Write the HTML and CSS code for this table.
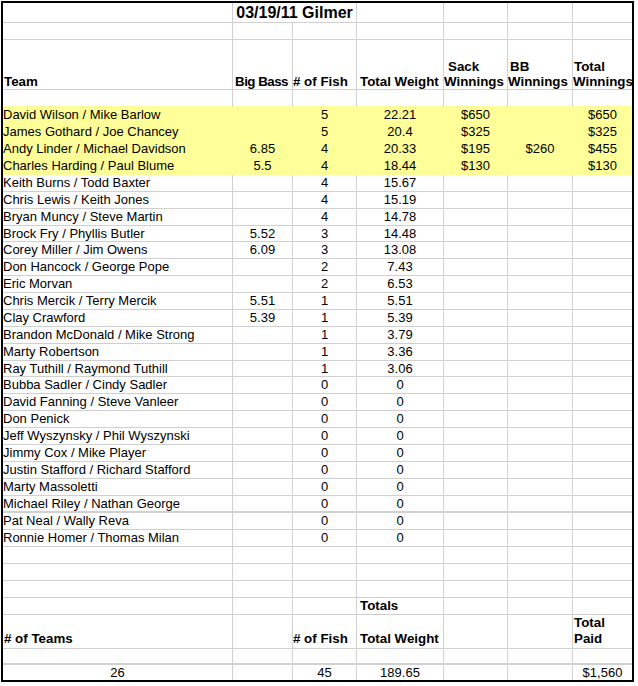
FILE: index.html
```html
<!DOCTYPE html>
<html>
<head>
<meta charset="utf-8">
<title>03/19/11 Gilmer</title>
<link rel="stylesheet" href="styles.css">
</head>
<body>
<table class="sheet">
  <colgroup>
    <col class="c-a"><col class="c-b"><col class="c-c"><col class="c-d"><col class="c-e"><col class="c-f"><col class="c-g">
  </colgroup>
  <tbody>
    <tr class="r-title"><td></td><td colspan="2" class="title">03/19/11 Gilmer</td><td></td><td></td><td></td><td></td></tr>
    <tr class="r"><td></td><td></td><td></td><td></td><td></td><td></td><td></td></tr>
    <tr class="r-head">
      <th class="pa">Team</th>
      <th class="pb tight">Big Bass</th>
      <th class="p0">#&nbsp;of Fish</th>
      <th class="pd">Total Weight</th>
      <th class="p0 ind4">Sack<br>Winnings</th>
      <th class="p0 ind2">BB<br>Winnings</th>
      <th class="p0 ind1">Total<br>Winnings</th>
    </tr>
    <tr class="r pre-hi"><td></td><td></td><td></td><td></td><td></td><td></td><td></td></tr>
    <tr class="r hi"><td>David Wilson / Mike Barlow</td><td class="n"></td><td class="n">5</td><td class="n">22.21</td><td class="n">$650</td><td class="n"></td><td class="n">$650</td></tr>
    <tr class="r hi"><td>James Gothard / Joe Chancey</td><td class="n"></td><td class="n">5</td><td class="n">20.4</td><td class="n">$325</td><td class="n"></td><td class="n">$325</td></tr>
    <tr class="r hi"><td>Andy Linder / Michael Davidson</td><td class="n">6.85</td><td class="n">4</td><td class="n">20.33</td><td class="n">$195</td><td class="n">$260</td><td class="n">$455</td></tr>
    <tr class="r hi"><td>Charles Harding / Paul Blume</td><td class="n">5.5</td><td class="n">4</td><td class="n">18.44</td><td class="n">$130</td><td class="n"></td><td class="n">$130</td></tr>
    <tr class="r"><td>Keith Burns / Todd Baxter</td><td class="n"></td><td class="n">4</td><td class="n">15.67</td><td></td><td></td><td></td></tr>
    <tr class="r"><td>Chris Lewis / Keith Jones</td><td class="n"></td><td class="n">4</td><td class="n">15.19</td><td></td><td></td><td></td></tr>
    <tr class="r"><td>Bryan Muncy / Steve Martin</td><td class="n"></td><td class="n">4</td><td class="n">14.78</td><td></td><td></td><td></td></tr>
    <tr class="r short"><td>Brock Fry / Phyllis Butler</td><td class="n">5.52</td><td class="n">3</td><td class="n">14.48</td><td></td><td></td><td></td></tr>
    <tr class="r"><td>Corey Miller / Jim Owens</td><td class="n">6.09</td><td class="n">3</td><td class="n">13.08</td><td></td><td></td><td></td></tr>
    <tr class="r"><td>Don Hancock / George Pope</td><td class="n"></td><td class="n">2</td><td class="n">7.43</td><td></td><td></td><td></td></tr>
    <tr class="r"><td>Eric Morvan</td><td class="n"></td><td class="n">2</td><td class="n">6.53</td><td></td><td></td><td></td></tr>
    <tr class="r"><td>Chris Mercik / Terry Mercik</td><td class="n">5.51</td><td class="n">1</td><td class="n">5.51</td><td></td><td></td><td></td></tr>
    <tr class="r"><td>Clay Crawford</td><td class="n">5.39</td><td class="n">1</td><td class="n">5.39</td><td></td><td></td><td></td></tr>
    <tr class="r"><td>Brandon McDonald / Mike Strong</td><td class="n"></td><td class="n">1</td><td class="n">3.79</td><td></td><td></td><td></td></tr>
    <tr class="r"><td>Marty Robertson</td><td class="n"></td><td class="n">1</td><td class="n">3.36</td><td></td><td></td><td></td></tr>
    <tr class="r short"><td>Ray Tuthill / Raymond Tuthill</td><td class="n"></td><td class="n">1</td><td class="n">3.06</td><td></td><td></td><td></td></tr>
    <tr class="r"><td>Bubba Sadler / Cindy Sadler</td><td class="n"></td><td class="n">0</td><td class="n">0</td><td></td><td></td><td></td></tr>
    <tr class="r"><td>David Fanning / Steve Vanleer</td><td class="n"></td><td class="n">0</td><td class="n">0</td><td></td><td></td><td></td></tr>
    <tr class="r"><td>Don Penick</td><td class="n"></td><td class="n">0</td><td class="n">0</td><td></td><td></td><td></td></tr>
    <tr class="r"><td>Jeff Wyszynsky / Phil Wyszynski</td><td class="n"></td><td class="n">0</td><td class="n">0</td><td></td><td></td><td></td></tr>
    <tr class="r"><td>Jimmy Cox / Mike Player</td><td class="n"></td><td class="n">0</td><td class="n">0</td><td></td><td></td><td></td></tr>
    <tr class="r"><td>Justin Stafford / Richard Stafford</td><td class="n"></td><td class="n">0</td><td class="n">0</td><td></td><td></td><td></td></tr>
    <tr class="r"><td>Marty Massoletti</td><td class="n"></td><td class="n">0</td><td class="n">0</td><td></td><td></td><td></td></tr>
    <tr class="r thick"><td>Michael Riley / Nathan George</td><td class="n"></td><td class="n">0</td><td class="n">0</td><td></td><td></td><td></td></tr>
    <tr class="r"><td>Pat Neal / Wally Reva</td><td class="n"></td><td class="n">0</td><td class="n">0</td><td></td><td></td><td></td></tr>
    <tr class="r"><td>Ronnie Homer / Thomas Milan</td><td class="n"></td><td class="n">0</td><td class="n">0</td><td></td><td></td><td></td></tr>
    <tr class="r"><td></td><td></td><td></td><td></td><td></td><td></td><td></td></tr>
    <tr class="r"><td></td><td></td><td></td><td></td><td></td><td></td><td></td></tr>
    <tr class="r"><td></td><td></td><td></td><td></td><td></td><td></td><td></td></tr>
    <tr class="r"><td></td><td></td><td></td><th class="pd">Totals</th><td></td><td></td><td></td></tr>
    <tr class="r-head2">
      <th class="pa">#&nbsp;of Teams</th>
      <td></td>
      <th class="p0">#&nbsp;of Fish</th>
      <th class="pd">Total Weight</th>
      <td></td>
      <td></td>
      <th class="pg">Total<br>Paid</th>
    </tr>
    <tr class="r-gap"><td></td><td></td><td></td><td></td><td></td><td></td><td></td></tr>
    <tr class="r-sum"><td class="n">26</td><td></td><td class="n">45</td><td class="n">189.65</td><td></td><td></td><td class="n">$1,560</td></tr>
  </tbody>
</table>
</body>
</html>
```

FILE: styles.css
```css
html, body {
  margin: 0;
  background: #ffffff;
}

body {
  font-family: "Liberation Sans", Arial, sans-serif;
  font-size: 13px;
  color: #000000;
}

.sheet {
  margin: 1px 0 0 1px;
  width: 633px;
  border: 2px solid #000000;
  border-collapse: separate;
  border-spacing: 0;
  table-layout: fixed;
}

.c-a { width: 230px; }
.c-b { width: 60px; }
.c-c { width: 64px; }
.c-d { width: 87px; }
.c-e { width: 64px; }
.c-f { width: 65px; }
.c-g { width: 59px; }

.sheet td,
.sheet th {
  padding: 0;
  border-right: 1px solid #d0d0d0;
  border-bottom: 1px solid #d0d0d0;
  vertical-align: bottom;
  white-space: nowrap;
  overflow: hidden;
  line-height: 16px;
  text-align: left;
  font-weight: normal;
}

.sheet th {
  font-weight: bold;
  font-size: 13.33px;
}

.sheet td:last-child,
.sheet th:last-child {
  border-right: 0;
}

.sheet .n {
  text-align: center;
}

/* header paddings */
.sheet .pa { padding-left: 1px; }
.sheet .pb { padding-left: 2px; }
.sheet .p0 { padding-left: 0; }
.sheet .pd { padding-left: 3px; }
.sheet .pg { padding-left: 1px; }
.ind1 { text-indent: 1px; }
.ind2 { text-indent: 2px; }
.ind4 { text-indent: 4px; }
.tight { letter-spacing: -0.5px; }

/* rows */
.r { height: 17px; }
.r.short { height: 16px; }
.sheet .r.short td { line-height: 15px; }
.sheet .r.thick td {
  border-bottom-width: 2px;
  line-height: 15px;
}

.r-title { height: 20px; }
.sheet .r-title td { line-height: 18px; }
.sheet .title {
  font-size: 16px;
  font-weight: bold;
  text-align: center;
}

.r-head { height: 50px; }
.sheet .r-head th { line-height: 15px; }

.r-head2 { height: 34px; }
.sheet .r-head2 th,
.sheet .r-head2 td {
  line-height: 16px;
  padding-bottom: 1px;
}

.r-gap { height: 16px; }
.sheet .r-gap td { border-bottom-width: 2px; }

.r-sum { height: 15px; }
.sheet .r-sum td {
  line-height: 15px;
  border-bottom: 0;
}

/* highlighted (winners) rows */
.sheet .pre-hi td { border-bottom-color: #ffff99; }
.sheet .hi td {
  background: #ffff99;
  border-right-color: #ffff99;
  border-bottom-color: #ffff99;
}
```
